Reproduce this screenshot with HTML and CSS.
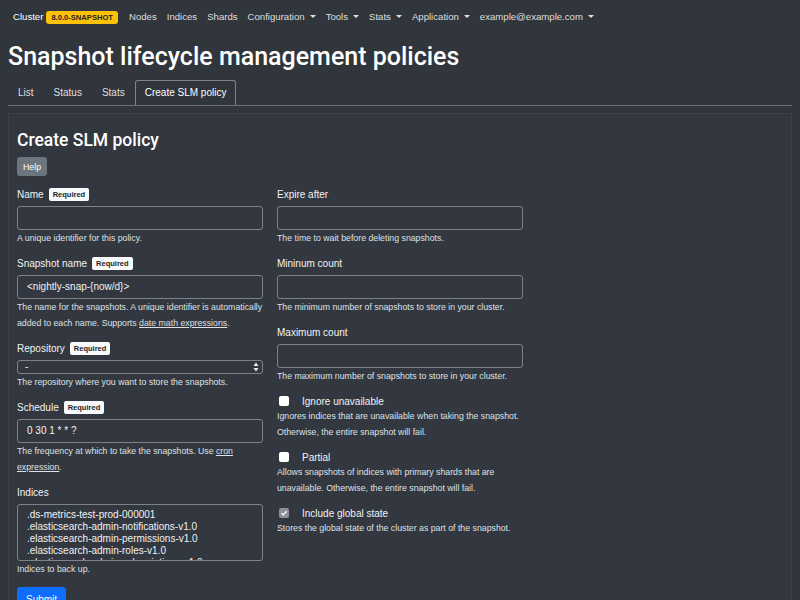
FILE: index.html
```html
<!DOCTYPE html>
<html lang="en">
<head>
<meta charset="utf-8">
<title>Snapshot lifecycle management policies</title>
<link rel="stylesheet" href="styles.css">
</head>
<body>
<nav class="navbar">
  <a class="brand">Cluster <span class="badge-version">8.0.0-SNAPSHOT</span></a>
  <a class="nav-link">Nodes</a>
  <a class="nav-link">Indices</a>
  <a class="nav-link">Shards</a>
  <a class="nav-link dropdown">Configuration</a>
  <a class="nav-link dropdown">Tools</a>
  <a class="nav-link dropdown">Stats</a>
  <a class="nav-link dropdown">Application</a>
  <a class="nav-link dropdown">example@example.com</a>
</nav>
<main class="page">
  <h1 class="title">Snapshot lifecycle management policies</h1>
  <ul class="tabs">
    <li><a class="tab">List</a></li>
    <li><a class="tab">Status</a></li>
    <li><a class="tab">Stats</a></li>
    <li><a class="tab active">Create SLM policy</a></li>
  </ul>
  <section class="card">
    <h2 class="card-title">Create SLM policy</h2>
    <button class="btn btn-help">Help</button>
    <div class="form-grid">
      <div class="col">
        <div class="field">
          <div class="label">Name <span class="req">Required</span></div>
          <div class="input"></div>
          <div class="help">A unique identifier for this policy.</div>
        </div>
        <div class="field">
          <div class="label">Snapshot name <span class="req">Required</span></div>
          <div class="input">&lt;nightly-snap-{now/d}&gt;</div>
          <div class="help">The name for the snapshots. A unique identifier is automatically<br>added to each name. Supports <a href="#">date math expressions</a>.</div>
        </div>
        <div class="field">
          <div class="label">Repository <span class="req">Required</span></div>
          <div class="input select">-
            <svg class="select-arrows" width="6" height="10" viewBox="0 0 6 10"><path d="M3 0.5 L5.5 4 L0.5 4 Z M3 9.5 L5.5 6 L0.5 6 Z" fill="#e9ecef"/></svg>
          </div>
          <div class="help">The repository where you want to store the snapshots.</div>
        </div>
        <div class="field">
          <div class="label">Schedule <span class="req">Required</span></div>
          <div class="input">0 30 1 * * ?</div>
          <div class="help">The frequency at which to take the snapshots. Use <a href="#">cron expression</a>.</div>
        </div>
        <div class="field">
          <div class="label">Indices</div>
          <div class="input textarea">
            <div>.ds-metrics-test-prod-000001</div>
            <div>.elasticsearch-admin-notifications-v1.0</div>
            <div>.elasticsearch-admin-permissions-v1.0</div>
            <div>.elasticsearch-admin-roles-v1.0</div>
            <div>.elasticsearch-admin-subscriptions-v1.0</div>
          </div>
          <div class="help">Indices to back up.</div>
        </div>
      </div>
      <div class="col">
        <div class="field">
          <div class="label">Expire after</div>
          <div class="input"></div>
          <div class="help">The time to wait before deleting snapshots.</div>
        </div>
        <div class="field">
          <div class="label">Mininum count</div>
          <div class="input"></div>
          <div class="help">The minimum number of snapshots to store in your cluster.</div>
        </div>
        <div class="field">
          <div class="label">Maximum count</div>
          <div class="input"></div>
          <div class="help">The maximum number of snapshots to store in your cluster.</div>
        </div>
        <div class="field">
          <div class="check"><span class="box"></span>Ignore unavailable</div>
          <div class="help">Ignores indices that are unavailable when taking the snapshot. Otherwise, the entire snapshot will fail.</div>
        </div>
        <div class="field">
          <div class="check"><span class="box"></span>Partial</div>
          <div class="help">Allows snapshots of indices with primary shards that are unavailable. Otherwise, the entire snapshot will fail.</div>
        </div>
        <div class="field">
          <div class="check"><span class="box checked"><svg width="10" height="10" viewBox="0 0 10 10"><path d="M2.5 5.2 L4.2 6.9 L7.6 3.2" fill="none" stroke="#fff" stroke-width="1.3"/></svg></span>Include global state</div>
          <div class="help">Stores the global state of the cluster as part of the snapshot.</div>
        </div>
      </div>
    </div>
    <button class="btn btn-submit">Submit</button>
  </section>
</main>
</body>
</html>
```
FILE: styles.css
```css
html, body {
  margin: 0;
  background: #31353c;
}
body {
  color: #dee2e6;
  font-family: "Liberation Sans", Arial, sans-serif;
  font-size: 10px;
  line-height: 1.5;
}
a { color: inherit; text-decoration: none; }

.navbar {
  display: flex;
  align-items: center;
  height: 35px;
  padding: 0 13px;
  font-size: 9.6px;
}
.brand {
  display: flex;
  align-items: center;
  gap: 3px;
  color: #fff;
  margin-right: 6px;
}
.badge-version {
  background: #ffc107;
  color: #212529;
  font-weight: 700;
  font-size: 7.6px;
  line-height: 13px;
  height: 13px;
  padding: 0 5px;
  border-radius: 3px;
}
.nav-link {
  color: rgba(255, 255, 255, 0.85);
  padding: 0 5px;
}
.dropdown::after {
  content: "";
  display: inline-block;
  margin-left: 5px;
  vertical-align: 2px;
  border-top: 3px solid;
  border-left: 3px solid transparent;
  border-right: 3px solid transparent;
}

.page {
  padding: 0 8px;
}
.title {
  margin: 7px 0 0;
  font-family: Roboto, "Liberation Sans", sans-serif;
  font-size: 25px;
  font-weight: 500;
  line-height: 30px;
  color: #fff;
}
.tabs {
  display: flex;
  list-style: none;
  margin: 8px 0 0;
  padding: 0;
  border-bottom: 1px solid #6c7178;
}
.tab {
  display: block;
  height: 24px;
  line-height: 24px;
  padding: 0 9px;
  border: 1px solid transparent;
  border-bottom: 0;
  border-radius: 3px 3px 0 0;
  color: rgba(255, 255, 255, 0.85);
}
.tab.active {
  border-color: #80858b;
  color: #fff;
}

.card {
  margin-top: 7px;
  border: 1px solid rgba(255, 255, 255, 0.05);
  border-bottom: 0;
  background: #33373f;
  padding: 16px 8px 16px 8px;
}
.card-title {
  margin: 0 0 6px;
  font-family: Roboto, "Liberation Sans", sans-serif;
  font-size: 17.5px;
  font-weight: 500;
  line-height: 21px;
  color: #fff;
}
.btn {
  display: block;
  border: 0;
  border-radius: 3px;
  color: #fff;
  font-family: "Liberation Sans", Arial, sans-serif;
  cursor: pointer;
}
.btn-help {
  height: 19px;
  padding: 0 6px;
  font-size: 8.75px;
  background: #6c757d;
  margin-bottom: 11px;
}
.form-grid {
  display: grid;
  grid-template-columns: 246px 246px;
  column-gap: 14px;
}
.field {
  margin-bottom: 10px;
}
.label {
  display: flex;
  align-items: center;
  gap: 5px;
  height: 14px;
  margin-bottom: 5px;
  color: #f1f3f5;
}
.req {
  background: #f8f9fa;
  color: #212529;
  font-weight: 700;
  font-size: 7.5px;
  height: 13px;
  line-height: 13px;
  padding: 0 4px;
  border-radius: 2px;
}
.input {
  box-sizing: border-box;
  height: 24px;
  border: 1px solid #7d8288;
  border-radius: 3px;
  padding: 0 9px;
  line-height: 22px;
  color: #f1f3f5;
  overflow: hidden;
  white-space: nowrap;
}
.select {
  position: relative;
  height: 14px;
  line-height: 12px;
  padding: 0 7px;
}
.select-arrows {
  position: absolute;
  right: 3px;
  top: 1px;
}
.textarea {
  height: 57px;
  padding: 4px 9px;
  line-height: 12px;
}
.help {
  font-size: 8.75px;
  line-height: 16px;
  color: #dee2e6;
}
.help a {
  text-decoration: underline;
}
.check {
  display: flex;
  align-items: center;
  height: 14px;
  color: #f1f3f5;
}
.box {
  box-sizing: border-box;
  width: 10px;
  height: 10px;
  background: #fff;
  border-radius: 2px;
  margin: 0 13px 0 2px;
}
.box.checked {
  background: #8e9297;
}
.box svg { display: block; }
.btn-submit {
  height: 24px;
  padding: 0 9px;
  font-size: 10px;
  background: #0d6efd;
}
```
